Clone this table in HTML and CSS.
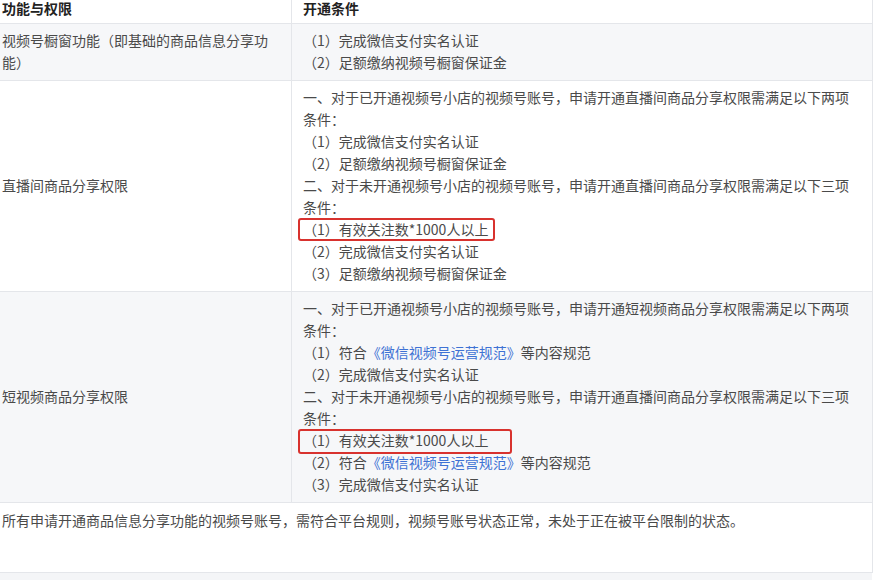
FILE: index.html
```html
<!DOCTYPE html>
<html lang="zh-CN">
<head>
<meta charset="utf-8">
<link rel="stylesheet" href="styles.css">
</head>
<body>
<div class="page">
  <table class="rules">
    <thead>
      <tr>
        <th class="col-a">功能与权限</th>
        <th class="col-b">开通条件</th>
      </tr>
    </thead>
    <tbody>
      <tr class="alt">
        <td class="col-a">视频号橱窗功能（即基础的商品信息分享功能）</td>
        <td class="col-b">
          <div>（1）完成微信支付实名认证</div>
          <div>（2）足额缴纳视频号橱窗保证金</div>
        </td>
      </tr>
      <tr>
        <td class="col-a">直播间商品分享权限</td>
        <td class="col-b">
          <div>一、对于已开通视频号小店的视频号账号，申请开通直播间商品分享权限需满足以下两项条件：</div>
          <div>（1）完成微信支付实名认证</div>
          <div>（2）足额缴纳视频号橱窗保证金</div>
          <div>二、对于未开通视频号小店的视频号账号，申请开通直播间商品分享权限需满足以下三项条件：</div>
          <div><span class="mark">（1）有效关注数*1000人以上</span></div>
          <div>（2）完成微信支付实名认证</div>
          <div>（3）足额缴纳视频号橱窗保证金</div>
        </td>
      </tr>
      <tr class="alt">
        <td class="col-a">短视频商品分享权限</td>
        <td class="col-b">
          <div>一、对于已开通视频号小店的视频号账号，申请开通短视频商品分享权限需满足以下两项条件：</div>
          <div>（1）符合<span class="link">《微信视频号运营规范》</span>等内容规范</div>
          <div>（2）完成微信支付实名认证</div>
          <div>二、对于未开通视频号小店的视频号账号，申请开通直播间商品分享权限需满足以下三项条件：</div>
          <div><span class="mark mark-wide">（1）有效关注数*1000人以上</span></div>
          <div>（2）符合<span class="link">《微信视频号运营规范》</span>等内容规范</div>
          <div>（3）完成微信支付实名认证</div>
        </td>
      </tr>
      <tr>
        <td class="note" colspan="2">所有申请开通商品信息分享功能的视频号账号，需符合平台规则，视频号账号状态正常，未处于正在被平台限制的状态。</td>
      </tr>
    </tbody>
  </table>
  <div class="foot"></div>
</div>
</body>
</html>
```

FILE: styles.css
```css
html, body {
  margin: 0;
  padding: 0;
  background: #ffffff;
}

body {
  font-family: "Noto Sans CJK SC", "Noto Sans", sans-serif;
  font-size: 14px;
  line-height: 22px;
  color: #4a4a4a;
  overflow: hidden;
  height: 580px;
}

.page {
  width: 873px;
  margin-top: -11px;
}

.rules {
  width: 873px;
  border-collapse: collapse;
  table-layout: fixed;
  border-right: 1px solid #e4e6ea;
}

.rules th,
.rules td {
  border-top: 1px solid #e4e6ea;
  border-bottom: 1px solid #e4e6ea;
  text-align: left;
}

.rules th {
  font-weight: 700;
  color: #222222;
  padding: 8px 12px 4px 2px;
  border-top: none;
}

.rules td {
  padding: 5px 12px 7px 2px;
}

.rules .col-a {
  width: 277px;
  vertical-align: middle;
}

.rules .col-b {
  border-left: 1px solid #e4e6ea;
  padding-left: 11px;
  vertical-align: top;
}

.rules tr.alt td {
  background: #f6f7f9;
}

.rules .note {
  padding: 6px 12px 41px 2px;
  vertical-align: top;
}

.link {
  color: #3e72d4;
}

.mark {
  position: relative;
}

.mark::after {
  content: "";
  position: absolute;
  left: -5px;
  right: -7px;
  top: -1px;
  bottom: -2px;
  border: 2px solid #d8322e;
  border-radius: 3px;
}

.mark-wide::after {
  right: -24px;
  top: -1px;
  bottom: -4px;
}

.foot {
  width: 872px;
  height: 12px;
  background: #f4f5f7;
}
```
